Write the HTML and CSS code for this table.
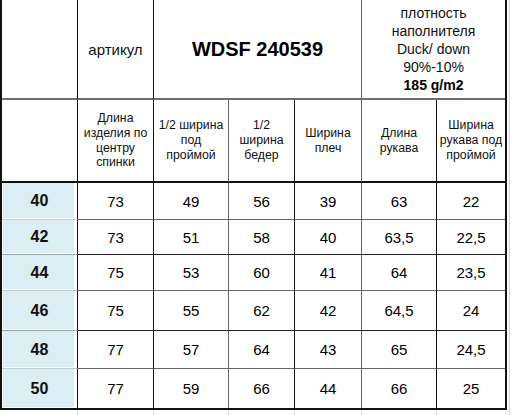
FILE: index.html
```html
<!DOCTYPE html>
<html lang="ru">
<head>
<meta charset="utf-8">
<title>WDSF 240539</title>
<link rel="stylesheet" href="styles.css">
</head>
<body>
<div class="sheet">
  <table class="size-table">
    <colgroup>
      <col class="w0"><col class="w1"><col class="w2"><col class="w3"><col class="w4"><col class="w5"><col class="w6">
    </colgroup>
    <tr class="head1">
      <td class="dark"></td>
      <td class="dark label">артикул</td>
      <td class="soft model" colspan="3">WDSF 240539</td>
      <td class="last filling" colspan="2">плотность<br>наполнителя<br>Duck/ down<br>90%-10%<br><b>185 g/m2</b></td>
    </tr>
    <tr class="head2">
      <td class="dark"></td>
      <td class="dark">Длина<br>изделия по<br>центру<br>спинки</td>
      <td class="soft">1/2 ширина<br>под<br>проймой</td>
      <td class="dark">1/2<br>ширина<br>бедер</td>
      <td class="soft">Ширина<br>плеч</td>
      <td class="dark">Длина<br>рукава</td>
      <td class="last">Ширина<br>рукава под<br>проймой</td>
    </tr>
    <tr class="row r1 soft-b"><th class="size">40</th><td class="dark">73</td><td class="soft">49</td><td class="dark">56</td><td class="soft">39</td><td class="dark">63</td><td class="last">22</td></tr>
    <tr class="row r2"><th class="size">42</th><td class="dark">73</td><td class="soft">51</td><td class="dark">58</td><td class="soft">40</td><td class="dark">63,5</td><td class="last">22,5</td></tr>
    <tr class="row r3 soft-b"><th class="size">44</th><td class="dark">75</td><td class="soft">53</td><td class="dark">60</td><td class="soft">41</td><td class="dark">64</td><td class="last">23,5</td></tr>
    <tr class="row r4"><th class="size">46</th><td class="dark">75</td><td class="soft">55</td><td class="dark">62</td><td class="soft">42</td><td class="dark">64,5</td><td class="last">24</td></tr>
    <tr class="row r5 soft-b"><th class="size">48</th><td class="dark">77</td><td class="soft">57</td><td class="dark">64</td><td class="soft">43</td><td class="dark">65</td><td class="last">24,5</td></tr>
    <tr class="row r6 end"><th class="size">50</th><td class="dark">77</td><td class="soft">59</td><td class="dark">66</td><td class="soft">44</td><td class="dark">66</td><td class="last">25</td></tr>
  </table>
  <div class="tail">
    <span class="t0"></span><span class="t1"></span><span class="t2"></span><span class="t3"></span><span class="t4"></span><span class="t5"></span><span class="t6"></span>
  </div>
</div>
</body>
</html>
```
FILE: styles.css
```css
body {
  margin: 0;
  background: #fff;
  font-family: "Liberation Sans", Arial, sans-serif;
  color: #111;
}

.sheet {
  width: 512px;
  height: 415px;
  overflow: hidden;
}

.size-table {
  table-layout: fixed;
  border-collapse: separate;
  border-spacing: 0;
  width: 507px;
  border-left: 2px solid #111;
  border-right: 2px solid #111;
  border-bottom: 2px solid #111;
  box-shadow: 2px 0 0 #fff, 3px 0 0 #d6d6d6;
}

.w0 { width: 76px; }
.w1 { width: 76px; }
.w2 { width: 75px; }
.w3 { width: 66px; }
.w4 { width: 67px; }
.w5 { width: 75px; }
.w6 { width: 68px; }

.size-table td,
.size-table th {
  padding: 0;
  text-align: center;
  vertical-align: middle;
  border-right: 1px solid #111;
  border-bottom: 1px solid #222;
  overflow: hidden;
  white-space: nowrap;
}

.size-table td.soft { border-right-color: #666; }
.size-table td.last { border-right: none; }

/* header row 1 */
.head1 { height: 100px; }
.head1 td { border-bottom: 2px solid #6e6e6e; }
.label { font-size: 15px; }
.model {
  font-size: 20px;
  font-weight: bold;
  color: #000;
}
.filling {
  font-size: 14px;
  line-height: 18px;
  padding-top: 1px;
}
.filling b { font-weight: bold; color: #000; }

/* header row 2 */
.head2 { height: 83px; }
.head2 td {
  border-bottom: 2px solid #111;
  font-size: 12.3px;
  line-height: 14.7px;
}

/* data rows */
.row td {
  font-size: 15px;
  color: #000;
}
.row.soft-b td { border-bottom-color: #666; }
.row.end td,
.row.end th { border-bottom: none; }

.r1 { height: 37px; }
.r2 { height: 35px; }
.r3 { height: 36px; }
.r4 { height: 40px; }
.r5 { height: 38px; }
.r6 { height: 39px; }

.size-table th.size {
  font-size: 16px;
  font-weight: bold;
  color: #111;
  background: #daeef3;
  border-right: 1px solid #111;
  border-bottom-color: #9aa6aa;
  box-shadow: inset -3px 0 0 #fff, inset 0 -1px 0 #fff, inset 1px 0 0 #fff;
}
.row.soft-b th.size { border-bottom-color: #c4cfd2; }

/* spreadsheet grid below table */
.tail {
  display: flex;
  height: 5px;
}
.tail span {
  display: block;
  flex: none;
  height: 5px;
  border-right: 1px solid #d6d6d6;
  box-sizing: border-box;
}
.tail .t0 { width: 78px; }
.tail .t1 { width: 76px; }
.tail .t2 { width: 75px; }
.tail .t3 { width: 66px; }
.tail .t4 { width: 67px; }
.tail .t5 { width: 75px; }
.tail .t6 { width: 73px; }
```
